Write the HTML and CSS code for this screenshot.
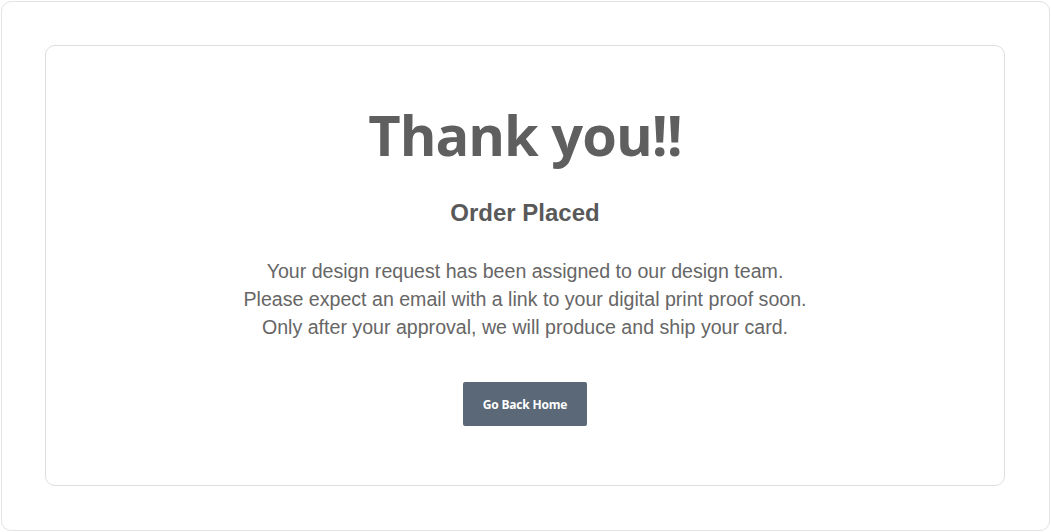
FILE: index.html
```html
<!DOCTYPE html>
<html>
<head>
<meta charset="utf-8">
<link rel="stylesheet" href="styles.css">
</head>
<body>
<div class="frame">
  <div class="card">
    <h1 class="title">Thank you!!</h1>
    <h2 class="subtitle">Order Placed</h2>
    <p class="message">
      Your design request has been assigned to our design team.<br>
      Please expect an email with a link to your digital print proof soon.<br>
      Only after your approval, we will produce and ship your card.
    </p>
    <a class="btn" href="#">Go Back Home</a>
  </div>
</div>
</body>
</html>
```

FILE: styles.css
```css
html, body {
	margin:0;
	padding:0;
	background-color:#fff;
}
.frame {
	margin:1px;
	height:530px;
	box-sizing:border-box;
	border:1px solid #e3e3e3;
	border-radius:10px;
	padding:43px 44px 0 43px;
}
.card {
	height:441px;
	box-sizing:border-box;
	border:1px solid #dedede;
	border-radius:10px;
	text-align:center;
	padding-top:53px;
}
.title {
	margin:0;
	font-family:"Open Sans", sans-serif;
	font-size:56px;
	font-weight:700;
	line-height:70px;
	color:#5f5f5f;
	letter-spacing:-1px;
}
.subtitle {
	margin:30px 0 0;
	font-family:"Liberation Sans", Arial, sans-serif;
	font-size:24px;
	font-weight:bold;
	line-height:28px;
	color:#595959;
}
.message {
	margin:30px 0 0;
	font-family:"Liberation Sans", Arial, sans-serif;
	font-size:19.6px;
	line-height:28px;
	color:#666;
}
.btn {
	display:inline-block;
	margin-top:41px;
	width:124px;
	height:44px;
	line-height:46px;
	background-color:#5a6877;
	border-radius:2px;
	color:#fff;
	font-family:"Open Sans", sans-serif;
	font-size:12px;
	font-weight:700;
	letter-spacing:-0.2px;
	text-decoration:none;
}
```
